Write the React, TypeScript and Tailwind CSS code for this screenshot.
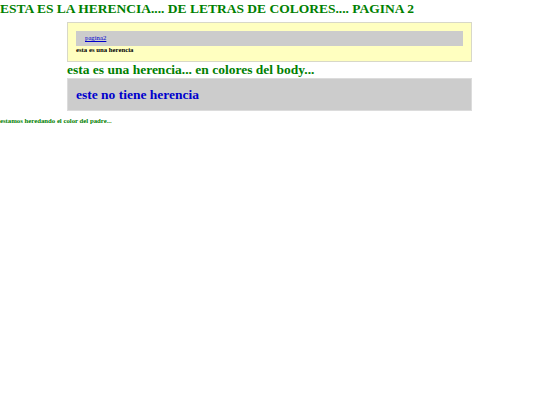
export default function App() {
  return (
    <div className="min-h-screen bg-white font-['Liberation_Serif',serif] font-bold text-[#008000]">
      <h1 className="text-[13.5px] leading-[17px]">ESTA ES LA HERENCIA.... DE LETRAS DE COLORES.... PAGINA 2</h1>
      <div className="ml-[67px] mt-[5px] w-[405px]">
        <div className="border border-[#d8d8c8] bg-[#ffffc0] px-[8px] pt-[8px] pb-[7px]">
          <div className="bg-[#cccccc] px-[9px] h-[15px] flex items-center">
            <a href="#" className="text-[6.75px] leading-none font-normal text-[#0000cc] underline">pagina2</a>
          </div>
          <p className="text-[6.75px] leading-[8px] text-black">esta es una herencia</p>
        </div>
        <h2 className="text-[13.5px] leading-[16px]">esta es una herencia... en colores del body...</h2>
        <div className="border border-[#dcdcdc] bg-[#cccccc] px-[8px] h-[33px] flex items-center">
          <p className="text-[13.5px] leading-[16px] text-[#0000cc]">este no tiene herencia</p>
        </div>
      </div>
      <p className="text-[6.75px] leading-[8px] mt-[6px]">estamos heredando el color del padre...</p>
    </div>
  );
}
